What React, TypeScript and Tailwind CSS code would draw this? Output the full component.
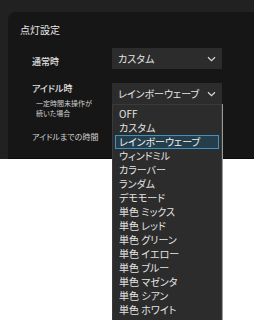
import React from 'react';

const options = [
  'OFF',
  'カスタム',
  'レインボーウェーブ',
  'ウィンドミル',
  'カラーバー',
  'ランダム',
  'デモモード',
  '単色 ミックス',
  '単色 レッド',
  '単色 グリーン',
  '単色 イエロー',
  '単色 ブルー',
  '単色 マゼンタ',
  '単色 シアン',
  '単色 ホワイト',
];

const Chevron = () => (
  <svg width="9" height="6" viewBox="0 0 9 6" fill="none">
    <path d="M1 1.2 L4.5 4.6 L8 1.2" stroke="#d8d8d8" strokeWidth="1.2" />
  </svg>
);

const Select = ({ value }: { value: string }) => (
  <div className="w-[110px] h-[21px] bg-[#2c2c2c] flex items-center justify-between pl-[6px] pr-[6px] text-[10px] text-[#e4e4e4]">
    <span>{value}</span>
    <Chevron />
  </div>
);

export default function App() {
  return (
    <div className="relative w-[254px] h-[320px] overflow-hidden bg-white [font-family:'Noto_Sans_CJK_JP',sans-serif] [font-feature-settings:'palt']">
      <div className="bg-[#212121] pt-[12px] pl-[8px]">
        <div className="h-[147px] bg-[#161616] rounded-tl-[8px] pt-[11px] border-b border-[#0c0c0c]">
          <div className="pl-[12px] text-[10px] leading-[14px] text-[#e6e6e6]">点灯設定</div>
          <div className="mt-[11px] flex">
            <div className="w-[104px] pl-[24px] pt-[8px] text-[9px] leading-[12px] font-medium text-[#e2e2e2]">通常時</div>
            <Select value="カスタム" />
          </div>
          <div className="mt-[14px] flex">
            <div className="w-[104px] pl-[24px]">
              <div className="text-[9px] leading-[12px] font-medium text-[#e2e2e2]">アイドル時</div>
              <div className="mt-[3px] pl-[4px] text-[7px] leading-[10px] text-[#cfcfcf]">
                一定時間未操作が
                <br />
                続いた場合
              </div>
            </div>
            <Select value="レインボーウェーブ" />
          </div>
          <div className="mt-[13px] pl-[24px] text-[8px] leading-[12px] text-[#d4d4d4]">アイドルまでの時間</div>
        </div>
      </div>

      <div className="absolute left-[112px] top-[104px] w-[110px] h-[230px] bg-[#2c2c2c] border border-[#3a3a3a] pt-[2px] shadow-[1px_0_0_#9a9a9a]">
        {options.map((o) => (
          <div
            key={o}
            className={
              o === 'レインボーウェーブ'
                ? 'mx-[2px] h-[14px] px-[3px] border border-[#3f93c2] bg-[#243e4c] text-[10px] leading-[12px] text-[#f0f0f0]'
                : 'mx-[2px] h-[14px] px-[3px] border border-transparent text-[10px] leading-[12px] text-[#e4e4e4]'
            }
          >
            {o}
          </div>
        ))}
      </div>
    </div>
  );
}
